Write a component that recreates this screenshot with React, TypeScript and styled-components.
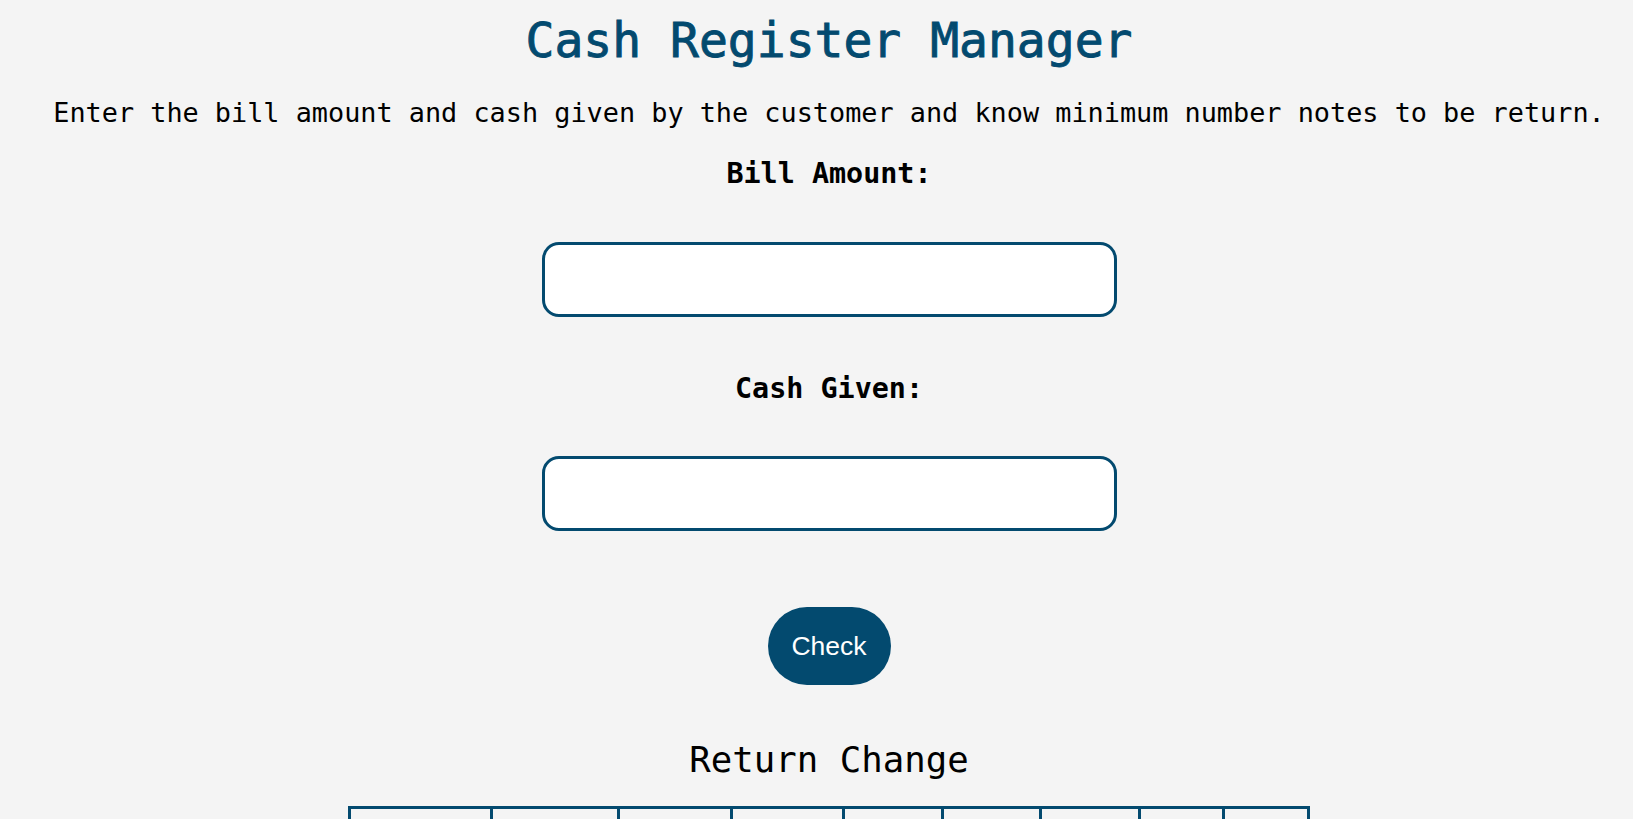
import React from "react";
import styled, { createGlobalStyle } from "styled-components";

const GlobalStyle = createGlobalStyle`
  html, body {
    margin: 0;
    padding: 0;
    background: #f4f4f4;
  }
  body {
    font-family: "DejaVu Sans Mono", "Liberation Mono", monospace;
    color: #000;
  }
`;

const Main = styled.main`
  display: flex;
  flex-direction: column;
  align-items: center;
  padding-left: 25px;
  text-align: center;
`;

const Title = styled.h1`
  margin: 12px 0 0;
  font-size: 48px;
  line-height: 57px;
  font-weight: 400;
  color: #034a6f;
  -webkit-text-stroke: 0.9px #034a6f;
  white-space: nowrap;
`;

const Description = styled.p`
  margin: 28px 0 0;
  font-size: 26.85px;
  line-height: 32px;
  white-space: nowrap;
`;

const Label = styled.label<{ $gap: number }>`
  display: block;
  margin-top: ${(p) => p.$gap}px;
  font-size: 28.4px;
  line-height: 34px;
  font-weight: 700;
`;

const Input = styled.input<{ $gap: number }>`
  display: block;
  box-sizing: border-box;
  margin-top: ${(p) => p.$gap}px;
  width: 575px;
  height: 75px;
  border: 3px solid #034a6f;
  border-radius: 17px;
  background: #fff;
  font-size: 24px;
  padding: 0 16px;
  outline: none;
`;

const CheckButton = styled.button`
  margin-top: 76px;
  box-sizing: border-box;
  width: 123px;
  height: 78px;
  border: none;
  border-radius: 39px;
  background: #034a6f;
  color: #fff;
  font-family: "Liberation Sans", Arial, sans-serif;
  font-size: 26.5px;
  cursor: pointer;
`;

const SubTitle = styled.h2`
  margin: 53.6px 0 0;
  font-size: 35.7px;
  line-height: 42px;
  font-weight: 400;
`;

const ChangeTable = styled.table`
  margin-top: 25.4px;
  width: 958px;
  table-layout: fixed;
  border-collapse: collapse;
  border: 3px solid #034a6f;
`;

const Cell = styled.td`
  border: 3px solid #034a6f;
  padding: 24px 8px 16px;
  font-size: 24px;
  text-align: center;
`;

const HeadCell = styled.th`
  border: 3px solid #034a6f;
  padding: 24px 8px 16px;
  font-size: 24px;
  font-weight: 700;
  text-align: center;
`;

const colWidths = [141.6, 127, 112.5, 112.5, 99, 97.9, 98.9, 84.4, 84.3];
const notes = [2000, 500, 100, 50, 20, 10, 5, 1];

export default function App() {
  return (
    <>
      <GlobalStyle />
      <Main>
        <Title>Cash Register Manager</Title>
        <Description>
          Enter the bill amount and cash given by the customer and know minimum number notes to be return.
        </Description>
        <Label $gap={27.6} htmlFor="bill">Bill Amount:</Label>
        <Input $gap={51} id="bill" type="number" />
        <Label $gap={55.5} htmlFor="cash">Cash Given:</Label>
        <Input $gap={50} id="cash" type="number" />
        <CheckButton>Check</CheckButton>
        <SubTitle>Return Change</SubTitle>
        <ChangeTable>
          <colgroup>
            {colWidths.map((w, i) => (
              <col key={i} style={{ width: `${w}px` }} />
            ))}
          </colgroup>
          <tbody>
            <tr>
              <HeadCell>Notes</HeadCell>
              {notes.map((n) => (
                <HeadCell key={n}>{n}</HeadCell>
              ))}
            </tr>
            <tr>
              <HeadCell>Count</HeadCell>
              {notes.map((n) => (
                <Cell key={n}></Cell>
              ))}
            </tr>
          </tbody>
        </ChangeTable>
      </Main>
    </>
  );
}
